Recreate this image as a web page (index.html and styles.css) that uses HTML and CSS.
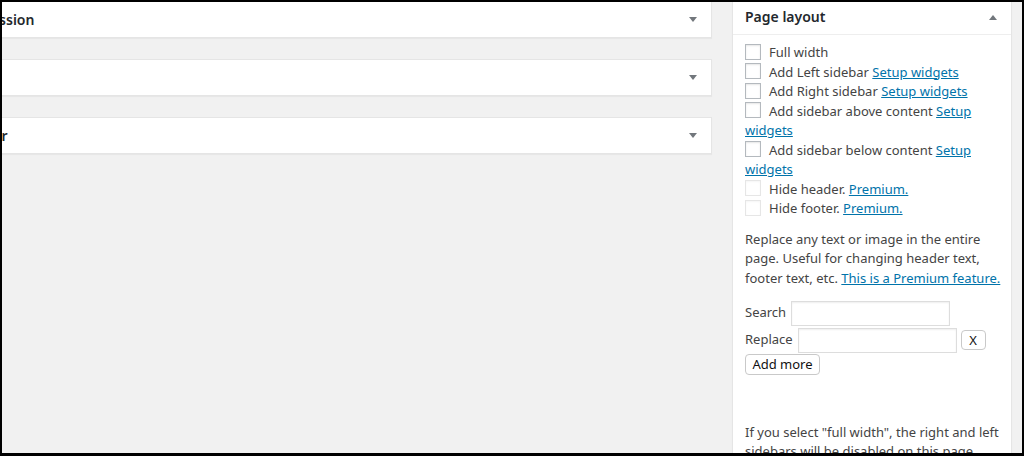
FILE: index.html
```html
<!DOCTYPE html>
<html>
<head>
<meta charset="utf-8">
<title>Edit page</title>
<link rel="stylesheet" href="styles.css">
</head>
<body>
<div class="frame">
  <div class="main">
    <div class="postbox">
      <h2 class="hndle">Discussion</h2>
      <span class="toggle"><svg width="8" height="5" viewBox="0 0 8 5"><path d="M0 0H8L4 5Z" fill="#72777c"/></svg></span>
    </div>
    <div class="postbox">
      <h2 class="hndle">Slug</h2>
      <span class="toggle"><svg width="8" height="5" viewBox="0 0 8 5"><path d="M0 0H8L4 5Z" fill="#72777c"/></svg></span>
    </div>
    <div class="postbox">
      <h2 class="hndle hndle-tight">Author</h2>
      <span class="toggle"><svg width="8" height="5" viewBox="0 0 8 5"><path d="M0 0H8L4 5Z" fill="#72777c"/></svg></span>
    </div>
  </div>
  <div class="side">
    <div class="sidebox">
      <div class="side-head">
        <h2 class="side-title">Page layout</h2>
        <span class="toggle"><svg width="8" height="5" viewBox="0 0 8 5"><path d="M0 5H8L4 0Z" fill="#72777c"/></svg></span>
      </div>
      <div class="inside">
        <div class="opts">
          <div class="opt"><span class="cb"></span>Full width</div>
          <div class="opt"><span class="cb"></span>Add Left sidebar <a href="#">Setup widgets</a></div>
          <div class="opt"><span class="cb"></span>Add Right sidebar <a href="#">Setup widgets</a></div>
          <div class="opt"><span class="cb"></span>Add sidebar above content <a href="#">Setup widgets</a></div>
          <div class="opt"><span class="cb"></span>Add sidebar below content <a href="#">Setup widgets</a></div>
          <div class="opt"><span class="cb cb-off"></span>Hide header. <a href="#">Premium.</a></div>
          <div class="opt"><span class="cb cb-off"></span>Hide footer. <a href="#">Premium.</a></div>
        </div>
        <p class="desc">Replace any text or image in the entire page. Useful for changing header text, footer text, etc. <a href="#" class="nowrap">This is a Premium feature.</a></p>
        <div class="frow frow-search"><span class="lbl">Search</span><span class="inp"></span></div>
        <div class="frow frow-replace"><span class="lbl">Replace</span><span class="inp"></span><span class="btn btn-x">X</span></div>
        <span class="btn btn-add">Add more</span>
        <p class="note">If you select "full width", the right and left sidebars will be disabled on this page.</p>
      </div>
    </div>
  </div>
</div>
</body>
</html>
```

FILE: styles.css
```css
* { box-sizing: border-box; }
html, body { margin: 0; padding: 0; }
body {
  width: 1024px;
  height: 456px;
  overflow: hidden;
  font-family: "Noto Sans", "Liberation Sans", Arial, sans-serif;
  font-size: 13px;
  line-height: 19.5px;
  color: #444;
  background: #000;
}
.frame {
  width: 1024px;
  height: 456px;
  border: 2px solid #000;
  border-bottom-width: 3px;
  background: #f1f1f1;
  display: flex;
  align-items: flex-start;
  padding-right: 10px;
  overflow: hidden;
}
.main {
  flex: 1;
  margin-left: -53px;
  margin-right: 20px;
  margin-top: -1px;
  display: flex;
  flex-direction: column;
  gap: 21px;
}
.postbox {
  height: 37px;
  background: #fff;
  border: 1px solid #e5e5e5;
  box-shadow: 0 1px 1px rgba(0,0,0,.04);
  display: flex;
  align-items: center;
  justify-content: space-between;
}
.hndle {
  margin: 0;
  padding: 0 12px;
  font-size: 14px;
  font-weight: 600;
  line-height: 20px;
  color: #23282d;
}
.hndle-tight { padding-left: 10px; }
.toggle {
  width: 36px;
  display: flex;
  justify-content: center;
  align-items: center;
}
.toggle svg { display: block; }
.side { width: 280px; flex: none; }
.sidebox {
  background: #fff;
  border: 1px solid #e5e5e5;
  border-top: none;
  box-shadow: 0 1px 1px rgba(0,0,0,.04);
  min-height: 460px;
}
.side-head {
  display: flex;
  align-items: center;
  justify-content: space-between;
  border-bottom: 1px solid #eee;
  padding: 5px 0 7px;
}
.side-title {
  margin: 0;
  padding: 0 12px;
  font-size: 14px;
  font-weight: 600;
  line-height: 20px;
  color: #23282d;
}
.inside { padding: 8px 12px 12px; }
a { color: #0073aa; text-decoration: underline; }
.nowrap { white-space: nowrap; }
.opt { line-height: 19.5px; }
.cb {
  display: inline-block;
  width: 16px;
  height: 16px;
  vertical-align: top;
  margin: 0.5px 8px 0 0;
  border: 1px solid #b4b9be;
  background: #fff;
  box-shadow: inset 0 1px 2px rgba(0,0,0,.1);
}
.cb-off {
  border-color: rgba(222,222,222,.75);
  box-shadow: inset 0 1px 2px rgba(0,0,0,.04);
}
.desc { margin: 11px -10px 0 0; }
.frow { display: flex; align-items: center; }
.frow-search { margin-top: 12.5px; height: 25px; }
.frow-replace { margin-top: 2px; height: 25px; }
.lbl { margin-right: 5px; }
.inp {
  display: block;
  width: 159px;
  height: 25px;
  border: 1px solid #ddd;
  background: #fff;
  box-shadow: inset 0 1px 2px rgba(0,0,0,.07);
}
.btn {
  display: inline-flex;
  align-items: center;
  justify-content: center;
  background: #fff;
  border: 1px solid #c9c9c9;
  border-radius: 4px;
  color: #111;
  font-size: 13px;
  line-height: 1;
}
.btn-x { width: 25px; height: 20px; margin-left: 4px; }
.btn-add { width: 75px; height: 21px; margin-top: 1px; vertical-align: top; }
.note { margin: 48px -6px 0 0; }
```
